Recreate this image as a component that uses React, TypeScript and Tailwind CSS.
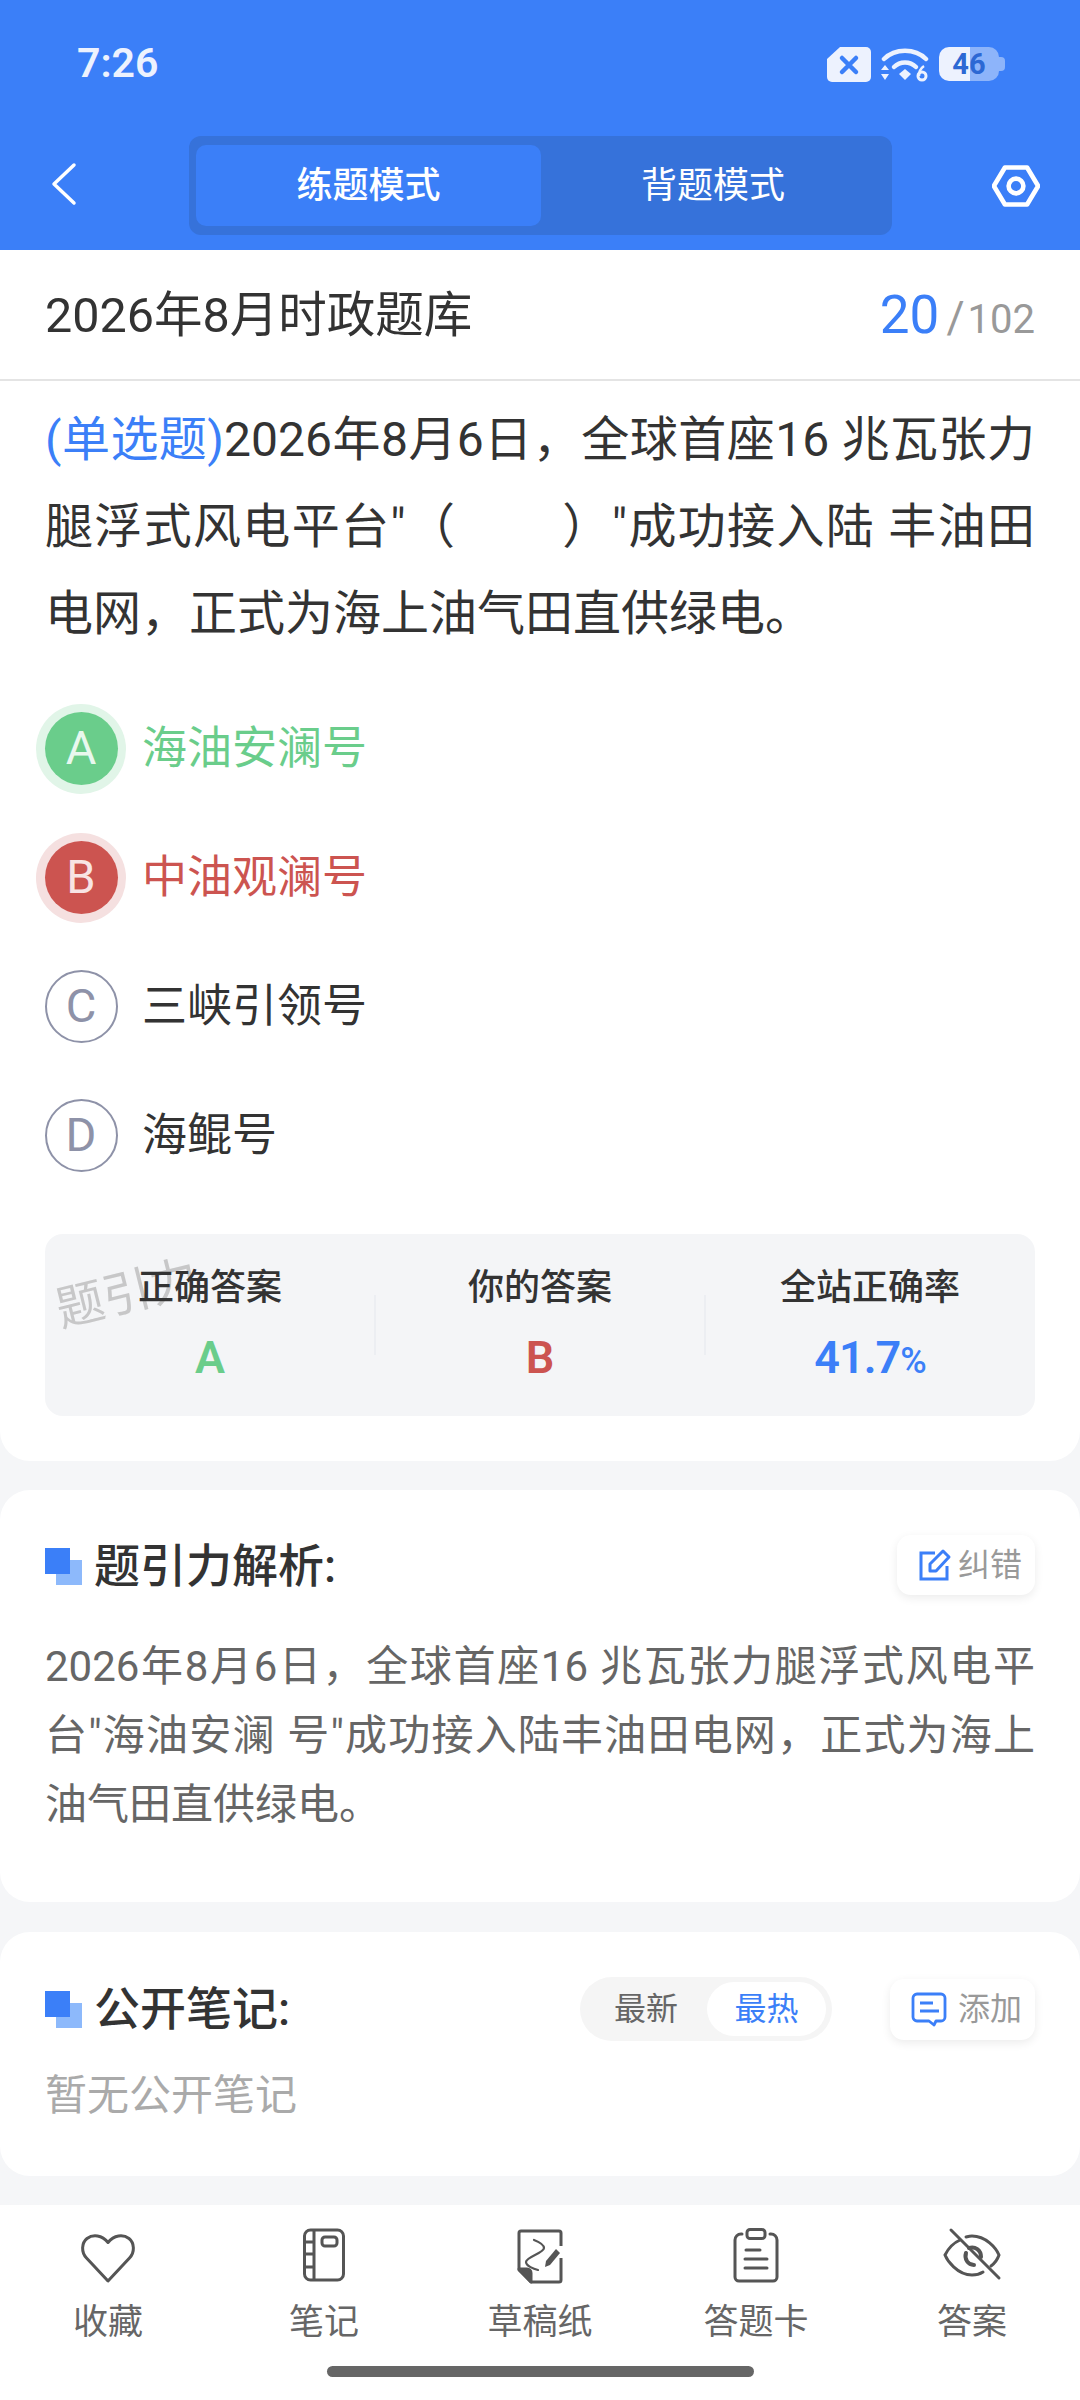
import type { ReactNode } from "react";

const iconClass = "w-[60px] h-[60px] text-[#555555]";

function HeartIcon() {
  return (
    <svg viewBox="0 0 60 60" className={iconClass} fill="none" stroke="currentColor" strokeWidth="3" strokeLinejoin="round">
      <path d="M30 55 L8.500 32 C3 26 3.500 17 9 12.500 C15 8 24 9 30 16.500 C36 9 45 8 51 12.500 C56.500 17 57 26 51.500 32 Z" />
    </svg>
  );
}

function NotebookIcon() {
  return (
    <svg viewBox="0 0 60 60" className={iconClass} fill="none" stroke="currentColor" strokeWidth="3">
      <rect x="10.500" y="4" width="39" height="50" rx="6" />
      <path d="M20 4V54M10.500 16H20M10.500 28H20M10.500 41H20" />
      <rect x="28" y="11" width="15" height="9" rx="3" />
    </svg>
  );
}

function DraftIcon() {
  return (
    <svg viewBox="0 0 60 60" className={iconClass} fill="none" stroke="currentColor" strokeWidth="3" strokeLinejoin="round">
      <path d="M51 20V7a2 2 0 0 0-2-2H11a2 2 0 0 0-2 2v37l12 12h28a2 2 0 0 0 2-2V32" />
      <path d="M9 43h8a4 4 0 0 1 4 4v9z" fill="currentColor" />
      <path d="M24 14c5 2 10 5 10 8 0 5-18 9-18 14 0 4 8 7 12 8" strokeWidth="2.200" strokeLinecap="round" />
      <path d="M36 35l10-12 4 4-10 12-5 2z" fill="currentColor" stroke="none" />
    </svg>
  );
}

function CardIcon() {
  return (
    <svg viewBox="0 0 60 60" className={iconClass} fill="none" stroke="currentColor" strokeWidth="3" strokeLinecap="round">
      <path d="M16 8h-1a6 6 0 0 0-6 6v37a4 4 0 0 0 4 4h34a4 4 0 0 0 4-4V14a6 6 0 0 0-6-6h-1" />
      <rect x="21" y="3.500" width="18" height="9" rx="3" />
      <path d="M20 24h14M19 33h22M19 42h22" />
    </svg>
  );
}

function EyeOffIcon() {
  return (
    <svg viewBox="0 0 60 60" className={iconClass} fill="none" stroke="currentColor" strokeWidth="3" strokeLinecap="round">
      <path d="M18 14C9 18 5 25 3 29c2 5 12 20 27 20 4 0 8-1 11-3" />
      <path d="M24 11c2-.5 4-1 6-1 14 0 24 12 27 19-1 3-4 8-8 11" />
      <path d="M27 22c6-2 12 2 12 9M24 27c-2 6 2 12 8 12" strokeWidth="4" />
      <path d="M9 4l48 48" />
    </svg>
  );
}

function EditIcon() {
  return (
    <svg viewBox="0 0 34 34" className="w-[34px] h-[34px] text-[#3b7ff8]" fill="none" stroke="currentColor" strokeWidth="3">
      <path d="M17 5H3v26h26V18" />
      <path d="M12 23v-7L25 3l6 6-13 14z" strokeLinejoin="round" />
    </svg>
  );
}

function CommentIcon() {
  return (
    <svg viewBox="0 0 36 36" className="w-[36px] h-[36px] text-[#3b7ff8]" fill="none" stroke="currentColor" strokeWidth="2.800" strokeLinejoin="round">
      <path d="M6 3h24a4 4 0 0 1 4 4v19a4 4 0 0 1-4 4h-5l-2 4-5-4H6a4 4 0 0 1-4-4V7a4 4 0 0 1 4-4z" />
      <path d="M9 12h13M9 20h19" strokeWidth="3" />
    </svg>
  );
}

function StatusIcons() {
  return (
    <div className="flex items-center gap-[10px]">
      <svg viewBox="0 0 44 35" className="w-[44px] h-[35px]">
        <path d="M13 0h26a5 5 0 0 1 5 5v25a5 5 0 0 1-5 5H5a5 5 0 0 1-5-5V12z" fill="#edf2fe" />
        <path d="M15 11l14 14M29 11L15 25" stroke="#3b7ff8" strokeWidth="4.500" strokeLinecap="round" />
      </svg>
      <svg viewBox="0 0 48 36" className="w-[48px] h-[36px] text-[#edf2fe]" fill="none" stroke="currentColor">
        <path d="M3 13C14 2 34 2 45 13" strokeWidth="4.500" strokeLinecap="round" />
        <path d="M13 21c6-6 16-6 22 0" strokeWidth="4.500" strokeLinecap="round" />
        <path d="M18 28l6-5 6 5-6 6z" fill="currentColor" stroke="none" />
        <path d="M0 24l4-5 4 5zM0 28h8l-4 6z" fill="currentColor" stroke="none" />
        <circle cx="41" cy="30" r="4" strokeWidth="3" />
        <path d="M38 30c0-5 2-8 5-10" strokeWidth="2.500" />
      </svg>
      <div className="relative flex h-[34px] w-[66px] items-center">
        <div className="absolute inset-y-0 left-0 w-[31px] rounded-l-[10px] bg-[#edf2fe]" />
        <div className="absolute inset-y-0 left-[31px] w-[29px] rounded-r-[10px] bg-[#8db4fa]" />
        <div className="absolute right-0 top-[10px] h-[14px] w-[6px] rounded-r-[4px] bg-[#8db4fa]" />
        <span className="relative w-[60px] text-center text-[29px] font-bold leading-none text-[#2c68d4]">46</span>
      </div>
    </div>
  );
}

function TopBar() {
  return (
    <div className="bg-[#3b7ff8]">
      <div className="flex h-[126px] items-start justify-between pl-[77px] pr-[75px] pt-[39px]">
        <span className="text-[41px] font-semibold leading-[48px] text-[#edf2fe]">7:26</span>
        <div className="pt-[7px]">
          <StatusIcons />
        </div>
      </div>
      <div className="flex h-[124px] items-start pl-[49px] pr-[40px] pt-[10px]">
        <svg viewBox="0 0 28 44" className="mt-[26px] h-[44px] w-[28px]" fill="none" stroke="white" strokeWidth="3.500" strokeLinecap="round" strokeLinejoin="round">
          <path d="M25 3L5 22l20 19" />
        </svg>
        <div className="ml-[112px] flex h-[99px] w-[703px] items-center rounded-[12px] bg-[#3672da] px-[7px]">
          <div className="flex h-[81px] w-[345px] items-center justify-center rounded-[10px] bg-[#3b7ff8] text-[36px] font-medium text-white">练题模式</div>
          <div className="flex h-[81px] w-[344px] items-center justify-center text-[36px] text-white">背题模式</div>
        </div>
        <svg viewBox="0 0 52 46" className="ml-auto mt-[28px] h-[44px] w-[48px]" fill="none" stroke="white" strokeWidth="5" strokeLinejoin="round">
          <path d="M14 3h24l12 20-12 20H14L2 23z" />
          <circle cx="26" cy="23" r="8" />
        </svg>
      </div>
    </div>
  );
}

const optionTones = {
  right: { dot: "bg-[#6acd8b] text-[#e8f8ee]", halo: "bg-[#e1f5e8]", text: "text-[#6acd8b]" },
  wrong: { dot: "bg-[#cc5450] text-[#f8e4e4]", halo: "bg-[#f5e0e0]", text: "text-[#cc5450]" },
};

function Option({ letter, text, tone }: { letter: string; text: string; tone?: "right" | "wrong" }) {
  const t = tone ? optionTones[tone] : null;
  return (
    <div className="flex h-[129px] items-center">
      <div className={`ml-[-9px] flex h-[90px] w-[90px] items-center justify-center rounded-full ${t ? t.halo : ""}`}>
        {t ? (
          <div className={`flex h-[73px] w-[73px] items-center justify-center rounded-full text-[47px] ${t.dot}`}>{letter}</div>
        ) : (
          <div className="flex h-[73px] w-[73px] items-center justify-center rounded-full border-2 border-[#8e92a8] text-[47px] text-[#8e92a8]">{letter}</div>
        )}
      </div>
      <span className={`ml-[16px] text-[45px] ${t ? t.text : "text-[#333333]"}`}>{text}</span>
    </div>
  );
}

function Stat({ label, children, line }: { label: string; children: ReactNode; line?: boolean }) {
  return (
    <div className="relative flex flex-col items-center pt-[32px]">
      <span className="text-[36px] font-medium leading-[44px] text-[#333333]">{label}</span>
      <span className="mt-[21px] text-[45px] font-semibold leading-[54px]">{children}</span>
      {line && <div className="absolute left-[-1px] top-[61px] h-[60px] w-[2px] bg-[#eceef2]" />}
    </div>
  );
}

function SectionTitle({ children }: { children: ReactNode }) {
  return (
    <div className="flex items-center">
      <div className="relative mr-[12px] h-[37px] w-[37px]">
        <div className="absolute bottom-0 right-0 h-[25px] w-[26px] bg-[#8db9fb]" />
        <div className="absolute left-0 top-0 h-[26px] w-[25px] bg-[#3b7ff8]" />
      </div>
      <span className="text-[46px] font-medium leading-[60px] text-[#333333]">{children}</span>
    </div>
  );
}

const tabs = [
  { label: "收藏", icon: <HeartIcon /> },
  { label: "笔记", icon: <NotebookIcon /> },
  { label: "草稿纸", icon: <DraftIcon /> },
  { label: "答题卡", icon: <CardIcon /> },
  { label: "答案", icon: <EyeOffIcon /> },
];

export default function App() {
  return (
    <div className="flex h-[2400px] w-[1080px] flex-col bg-[#f5f6f8] font-[Roboto,'Noto_Sans_CJK_SC',sans-serif]">
      <TopBar />

      <div className="rounded-b-[30px] bg-white pb-[45px]">
        <div className="flex h-[131px] items-center justify-between border-b-2 border-[#e4e4e4] pl-[45px] pr-[45px] pt-[3px]">
          <span className="text-[48.500px] text-[#333333]">2026年8月时政题库</span>
          <div className="flex items-baseline">
            <span className="text-[53px] text-[#3b7ff8]">20</span>
            <span className="ml-[7px] text-[44px] text-[#999999]">/</span>
            <span className="ml-[3px] text-[40px] text-[#999999]">102</span>
          </div>
        </div>

        <div className="px-[45px] pt-[15px]">
          <p className="text-justify text-[48px] leading-[87px] text-[#333333]">
            <span className="text-[#3b7ff8]">(单选题)</span>
            2026年8月6日，全球首座16 兆瓦张力腿浮式风电平台"（&nbsp;&nbsp;&nbsp;&nbsp;&nbsp;&nbsp;&nbsp;&nbsp;）"成功接入陆 丰油田电网，正式为海上油气田直供绿电。
          </p>

          <div className="mt-[27px]">
            <Option letter="A" text="海油安澜号" tone="right" />
            <Option letter="B" text="中油观澜号" tone="wrong" />
            <Option letter="C" text="三峡引领号" />
            <Option letter="D" text="海鲲号" />
          </div>

          <div className="relative mt-[34px] grid h-[182px] grid-cols-3 rounded-[18px] bg-[#f4f5f7]">
            <span className="absolute left-[10px] top-[24px] -rotate-[14deg] text-[48px] text-[#b4b4b4]/70">题引力</span>
            <Stat label="正确答案">
              <span className="text-[#6acd8b]">A</span>
            </Stat>
            <Stat label="你的答案" line>
              <span className="text-[#cc5450]">B</span>
            </Stat>
            <Stat label="全站正确率" line>
              <span className="tracking-[-1px] text-[#3b7ff8]">
                41.7<span className="text-[36px] font-medium">%</span>
              </span>
            </Stat>
          </div>
        </div>
      </div>

      <div className="mt-[29px] h-[412px] rounded-[30px] bg-white px-[45px] pt-[46px]">
        <div className="flex items-start justify-between">
          <SectionTitle>题引力解析:</SectionTitle>
          <div className="mt-[-1px] flex h-[60px] w-[138px] items-center gap-[6px] rounded-[14px] bg-white pl-[21px] shadow-[0_3px_10px_rgba(0,0,0,0.08)]">
            <EditIcon />
            <span className="text-[32px] text-[#999999]">纠错</span>
          </div>
        </div>
        <p className="mt-[36px] text-justify text-[42px] leading-[69px] text-[#666666]">
          2026年8月6日，全球首座16 兆瓦张力腿浮式风电平台"海油安澜 号"成功接入陆丰油田电网，正式为海上油气田直供绿电。
        </p>
      </div>

      <div className="mt-[30px] h-[244px] rounded-[30px] bg-white px-[45px] pt-[45px]">
        <div className="flex items-center">
          <SectionTitle>公开笔记:</SectionTitle>
          <div className="ml-auto flex h-[64px] w-[252px] items-center rounded-full bg-[#f5f5f5] pl-[5px] pr-[6px]">
            <span className="w-[122px] text-center text-[32px] text-[#666666]">最新</span>
            <span className="flex h-[54px] w-[119px] items-center justify-center rounded-full bg-white text-[32px] text-[#3b7ff8]">最热</span>
          </div>
          <div className="ml-[58px] flex h-[61px] w-[145px] items-center gap-[11px] rounded-[14px] bg-white pl-[21px] shadow-[0_3px_10px_rgba(0,0,0,0.08)]">
            <CommentIcon />
            <span className="text-[32px] text-[#999999]">添加</span>
          </div>
        </div>
        <p className="mt-[27px] text-[42px] leading-[56px] text-[#aaaaaa]">暂无公开笔记</p>
      </div>

      <div className="mt-auto h-[195px] bg-white">
        <div className="grid grid-cols-5 pt-[21px]">
          {tabs.map((tab) => (
            <div key={tab.label} className="flex flex-col items-center">
              {tab.icon}
              <span className="mt-[15px] text-[35px] leading-[44px] text-[#666666]">{tab.label}</span>
            </div>
          ))}
        </div>
        <div className="mx-auto mt-[21px] h-[11px] w-[427px] rounded-full bg-[#666666]" />
      </div>
    </div>
  );
}
